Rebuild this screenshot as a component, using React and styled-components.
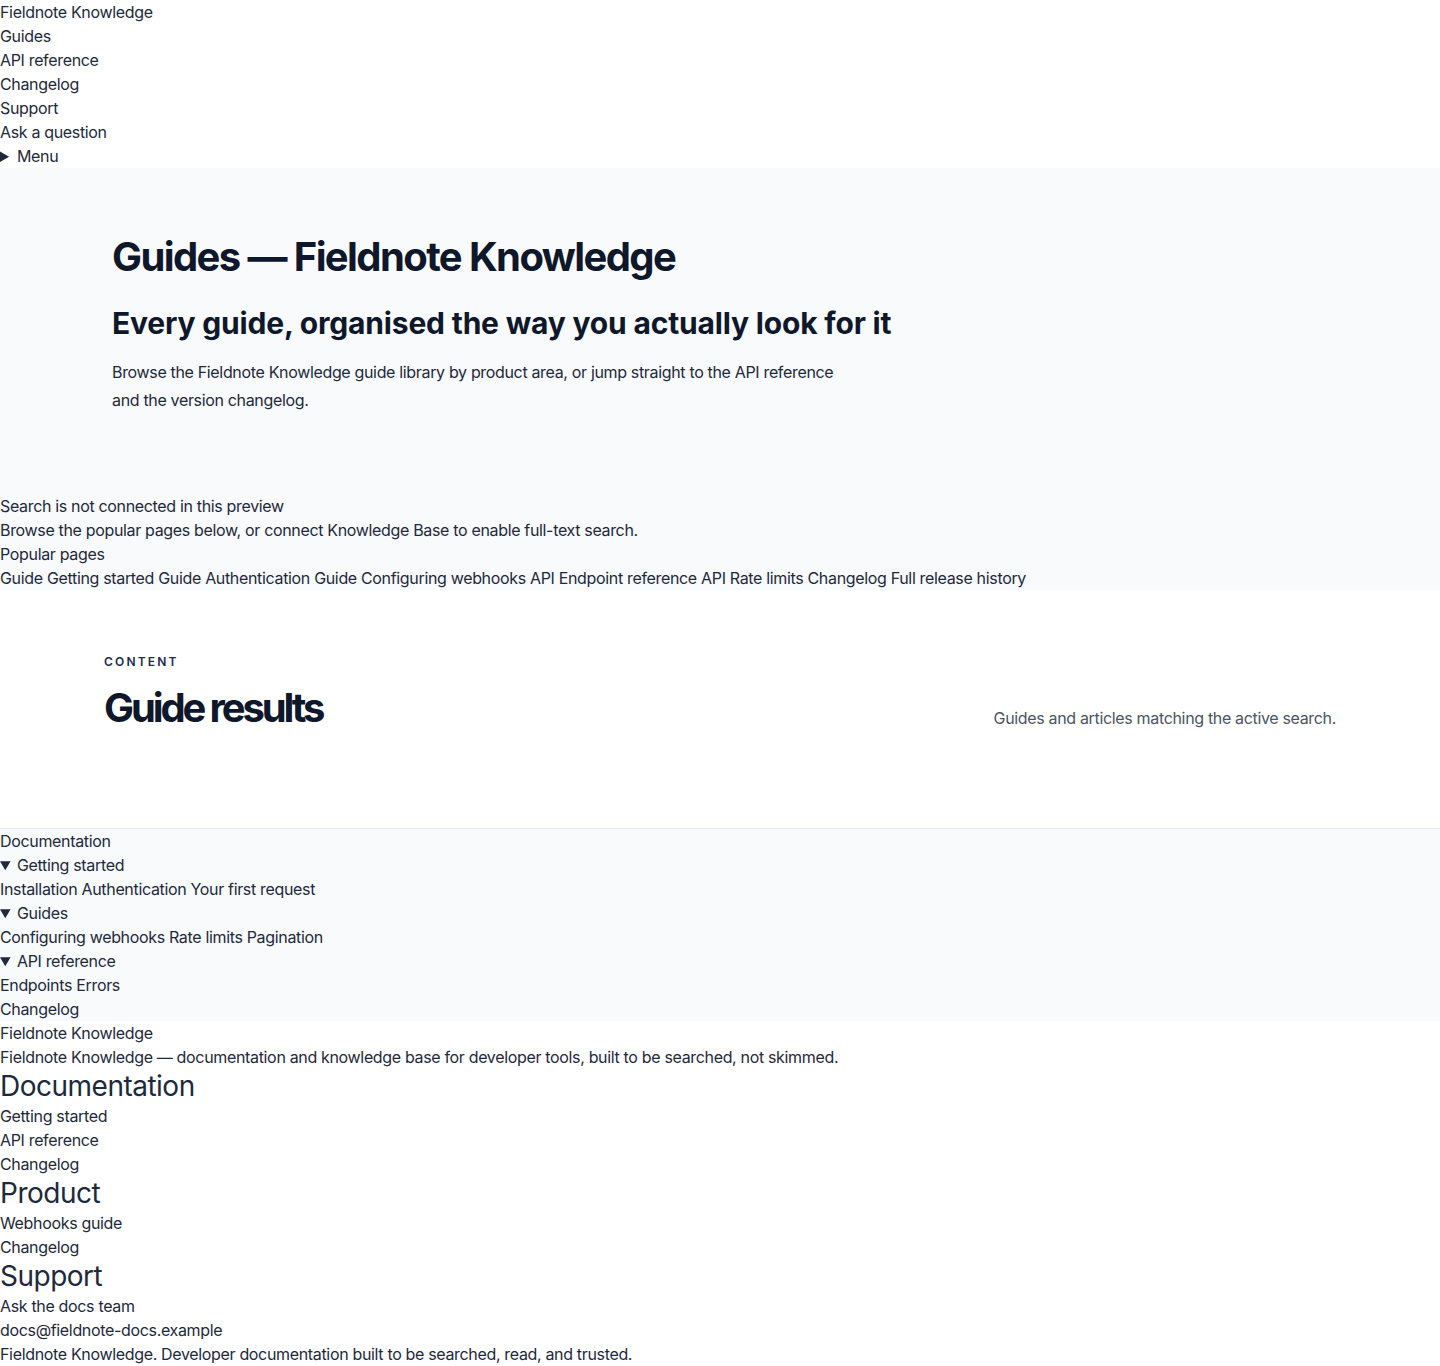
import React from 'react';
import styled, { createGlobalStyle } from 'styled-components';

const GlobalStyle = createGlobalStyle`
  html, body {
    margin: 0;
    padding: 0;
    background: #ffffff;
  }
  body {
    font-family: Inter, "Noto Sans", "Liberation Sans", sans-serif;
    font-size: 16px;
    line-height: 24px;
    letter-spacing: -0.021em;
    color: #1e293b;
  }
  a {
    color: inherit;
    text-decoration: none;
  }
`;

const Header = styled.header`
  display: block;
`;

const Line = styled.div`
  display: block;
`;

const Menu = styled.details`
  summary {
    cursor: pointer;
  }
`;

const Hero = styled.section`
  background: #f8fafc;
`;

const HeroInner = styled.div`
  max-width: 1216px;
  margin: 0 auto;
  padding: 65px 0 80px;
`;

const HeroTitle = styled.h1`
  margin: 0;
  font-size: 40px;
  line-height: 48px;
  font-weight: 700;
  letter-spacing: -0.04em;
  color: #0f172a;
`;

const HeroSubtitle = styled.h2`
  margin: 24px 0 0;
  font-size: 30px;
  line-height: 36px;
  font-weight: 700;
  letter-spacing: -0.006em;
  color: #0f172a;
`;

const HeroLead = styled.p`
  margin: 17px 0 0;
  max-width: 740px;
  line-height: 28px;
  color: #1e293b;
`;

const Notice = styled.div`
  display: block;
`;

const Chips = styled.div`
  display: block;
`;

const Results = styled.section`
  background: #ffffff;
  border-bottom: 1px solid #e2e8f0;
`;

const ResultsInner = styled.div`
  max-width: 1232px;
  margin: 0 auto;
  padding: 64px 0 98px;
`;

const ResultsHead = styled.div`
  display: flex;
  justify-content: space-between;
  align-items: flex-end;
  gap: 32px;
`;

const Eyebrow = styled.div`
  font-size: 12px;
  line-height: 16px;
  font-weight: 600;
  letter-spacing: 0.18em;
  text-transform: uppercase;
  color: #1e2b4f;
`;

const ResultsTitle = styled.h2`
  margin: 16px 0 0;
  font-size: 40px;
  line-height: 44px;
  font-weight: 700;
  letter-spacing: -0.078em;
  color: #0f172a;
`;

const ResultsNote = styled.p`
  margin: 0;
  color: #4b5563;
`;

const Sidebar = styled.nav`
  background: #f8fafc;
  details > summary {
    cursor: pointer;
  }
`;

const Footer = styled.footer`
  display: block;
`;

const FooterHeading = styled.h3`
  margin: 0;
  font-size: 28px;
  line-height: 35px;
  font-weight: 400;
  letter-spacing: -0.018em;
  color: #1e293b;
`;

const popular = [
  ['Guide', 'Getting started'],
  ['Guide', 'Authentication'],
  ['Guide', 'Configuring webhooks'],
  ['API', 'Endpoint reference'],
  ['API', 'Rate limits'],
  ['Changelog', 'Full release history'],
];

const tree = [
  { title: 'Getting started', items: ['Installation', 'Authentication', 'Your first request'] },
  { title: 'Guides', items: ['Configuring webhooks', 'Rate limits', 'Pagination'] },
  { title: 'API reference', items: ['Endpoints', 'Errors'] },
];

const footerCols = [
  { title: 'Documentation', links: ['Getting started', 'API reference', 'Changelog'] },
  { title: 'Product', links: ['Webhooks guide', 'Changelog'] },
  { title: 'Support', links: ['Ask the docs team', 'docs@fieldnote-docs.example'] },
];

export default function App() {
  return (
    <>
      <GlobalStyle />
      <Header>
        <Line><a href="#">Fieldnote Knowledge</a></Line>
        <Line><a href="#">Guides</a></Line>
        <Line><a href="#">API reference</a></Line>
        <Line><a href="#">Changelog</a></Line>
        <Line><a href="#">Support</a></Line>
        <Line><a href="#">Ask a question</a></Line>
        <Menu>
          <summary>Menu</summary>
        </Menu>
      </Header>

      <Hero>
        <HeroInner>
          <HeroTitle>Guides — Fieldnote Knowledge</HeroTitle>
          <HeroSubtitle>Every guide, organised the way you actually look for it</HeroSubtitle>
          <HeroLead>
            Browse the Fieldnote Knowledge guide library by product area, or jump straight to the API
            reference and the version changelog.
          </HeroLead>
        </HeroInner>
        <Notice>
          <Line>Search is not connected in this preview</Line>
          <Line>Browse the popular pages below, or connect Knowledge Base to enable full-text search.</Line>
          <Line>Popular pages</Line>
          <Chips>
            {popular.map(([kind, label], i) => (
              <React.Fragment key={label}>
                {i > 0 && ' '}
                <a href="#">
                  <span>{kind}</span> <span>{label}</span>
                </a>
              </React.Fragment>
            ))}
          </Chips>
        </Notice>
      </Hero>

      <Results>
        <ResultsInner>
          <ResultsHead>
            <div>
              <Eyebrow>Content</Eyebrow>
              <ResultsTitle>Guide results</ResultsTitle>
            </div>
            <ResultsNote>Guides and articles matching the active search.</ResultsNote>
          </ResultsHead>
        </ResultsInner>
      </Results>

      <Sidebar>
        <Line>Documentation</Line>
        {tree.map((group) => (
          <details open key={group.title}>
            <summary>{group.title}</summary>
            <Line>
              {group.items.map((item, i) => (
                <React.Fragment key={item}>
                  {i > 0 && ' '}
                  <a href="#">{item}</a>
                </React.Fragment>
              ))}
            </Line>
          </details>
        ))}
        <Line><a href="#">Changelog</a></Line>
      </Sidebar>

      <Footer>
        <Line>Fieldnote Knowledge</Line>
        <Line>
          Fieldnote Knowledge — documentation and knowledge base for developer tools, built to be
          searched, not skimmed.
        </Line>
        {footerCols.map((col) => (
          <div key={col.title}>
            <FooterHeading>{col.title}</FooterHeading>
            {col.links.map((l) => (
              <Line key={l}><a href="#">{l}</a></Line>
            ))}
          </div>
        ))}
        <Line>Fieldnote Knowledge. Developer documentation built to be searched, read, and trusted.</Line>
      </Footer>
    </>
  );
}
